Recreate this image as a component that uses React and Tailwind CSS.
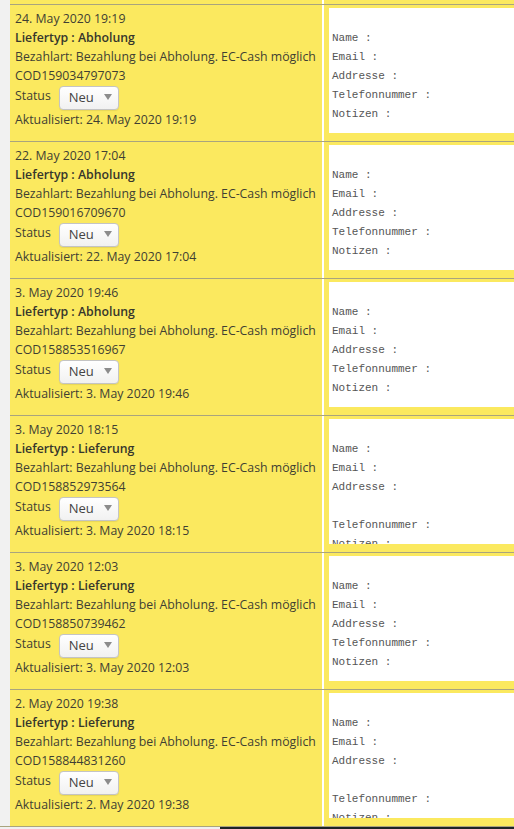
import React from "react";

const orders = [
  { date: "24. May 2020 19:19", typ: "Abholung", cod: "COD159034797073", gap: false },
  { date: "22. May 2020 17:04", typ: "Abholung", cod: "COD159016709670", gap: false },
  { date: "3. May 2020 19:46", typ: "Abholung", cod: "COD158853516967", gap: false },
  { date: "3. May 2020 18:15", typ: "Lieferung", cod: "COD158852973564", gap: true },
  { date: "3. May 2020 12:03", typ: "Lieferung", cod: "COD158850739462", gap: false },
  { date: "2. May 2020 19:38", typ: "Lieferung", cod: "COD158844831260", gap: true },
];

const StatusSelect = () => (
  <div className="ml-[8px] flex h-[24px] w-[60px] items-center rounded-[4px] border border-[#c4c4c4] bg-gradient-to-b from-white to-[#f1f1f1] pl-[9px] shadow-[0_1px_1px_rgba(0,0,0,0.08)]">
    <span className="text-[13px] text-[#444]">Neu</span>
    <svg width="8" height="6" viewBox="0 0 8 6" className="ml-[10px] mt-[-2px]">
      <path d="M0 0 H8 L4 6 Z" fill="#8c8c8c" />
    </svg>
  </div>
);

const OrderRow = ({ order }) => {
  const notes = order.gap
    ? "\nName : \nEmail : \nAddresse : \n\nTelefonnummer : \nNotizen : "
    : "\nName : \nEmail : \nAddresse : \nTelefonnummer : \nNotizen : ";

  return (
    <div className="flex h-[137px] border-t border-[#a9a47e]">
      {/* Order info */}
      <div className="w-[312px] shrink-0 bg-[#fbe95f] pl-[5px] pt-[4px] text-[12.3px] leading-[19px] text-[#3f3f33]">
        <div>{order.date}</div>
        <div className="font-semibold text-[#36362c]">Liefertyp : {order.typ}</div>
        <div className="whitespace-nowrap">Bezahlart: Bezahlung bei Abholung. EC-Cash möglich</div>
        <div>{order.cod}</div>
        <div className="flex h-[25px] items-center">
          <span className="-mt-[4px]">Status</span>
          <StatusSelect />
        </div>
        <div>Aktualisiert: {order.date}</div>
      </div>

      <div className="w-[2px] shrink-0 bg-white" />

      {/* Customer details */}
      <div className="flex-1 bg-[#fbe95f] pl-[5px] pt-[3px]">
        <div className="h-[125px] w-[260px] overflow-hidden whitespace-pre bg-white pl-[3px] pt-[2px] font-['Liberation_Mono',monospace] text-[11px] leading-[19px] text-[#555]">
          {notes}
        </div>
      </div>
    </div>
  );
};

export default function App() {
  return (
    <div className="h-[829px] w-[514px] overflow-hidden bg-[#f1f1f1] font-['Open_Sans',sans-serif]">
      <div className="ml-[10px]">
        {/* tail of the previous row */}
        <div className="flex h-[4px]">
          <div className="w-[312px] bg-[#fbe95f]" />
          <div className="w-[2px] bg-white" />
          <div className="flex-1 bg-[#fbe95f]" />
        </div>

        {orders.map((order) => (
          <OrderRow key={order.cod} order={order} />
        ))}
      </div>

      <div className="flex h-[4px] border-t border-[#a9a47e]">
        <div className="w-[220px] bg-[#f0f0f1]" />
        <div className="flex-1 bg-[#1d2327]" />
      </div>
    </div>
  );
}
